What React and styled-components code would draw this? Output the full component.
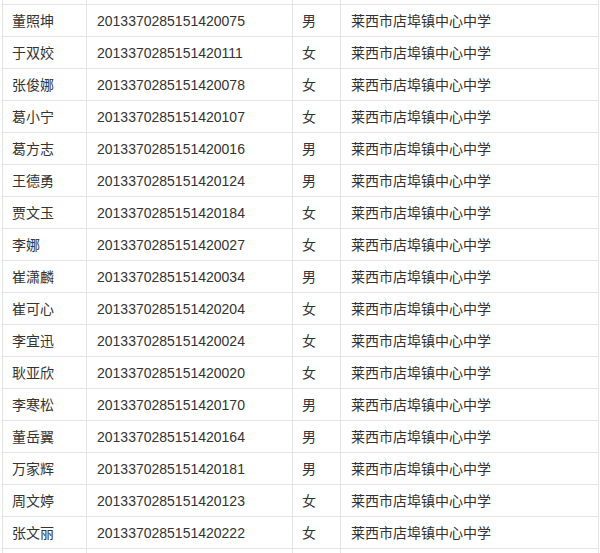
import React from "react";
import styled, { createGlobalStyle } from "styled-components";

const Global = createGlobalStyle`
  html, body { margin: 0; padding: 0; background: #fff; }
  body { font-family: "Liberation Sans", "Noto Sans CJK SC", sans-serif; }
`;

const Page = styled.div`
  width: 600px;
  height: 553px;
  overflow: hidden;
  background: #fff;
`;

const Table = styled.table`
  margin: -28px 0 0 2px;
  width: 596px;
  border-collapse: collapse;
  table-layout: fixed;
  font-size: 14px;
  color: #333;
`;

const Cell = styled.td`
  height: 31px;
  padding: 0 0 0 ${(p) => p.$pad || 10}px;
  border: 1px solid #e3e3e3;
  vertical-align: middle;
  white-space: nowrap;
  line-height: 20px;
  overflow: hidden;
`;

const rows = [
  ["董照坤", "2013370285151420075", "男"],
  ["于双姣", "2013370285151420111", "女"],
  ["张俊娜", "2013370285151420078", "女"],
  ["葛小宁", "2013370285151420107", "女"],
  ["葛方志", "2013370285151420016", "男"],
  ["王德勇", "2013370285151420124", "男"],
  ["贾文玉", "2013370285151420184", "女"],
  ["李娜", "2013370285151420027", "女"],
  ["崔潇麟", "2013370285151420034", "男"],
  ["崔可心", "2013370285151420204", "女"],
  ["李宜迅", "2013370285151420024", "女"],
  ["耿亚欣", "2013370285151420020", "女"],
  ["李寒松", "2013370285151420170", "男"],
  ["董岳翼", "2013370285151420164", "男"],
  ["万家辉", "2013370285151420181", "男"],
  ["周文婷", "2013370285151420123", "女"],
  ["张文丽", "2013370285151420222", "女"],
];

const school = "莱西市店埠镇中心中学";

export default function App() {
  return (
    <Page>
      <Global />
      <Table>
        <colgroup>
          <col style={{ width: 84 }} />
          <col style={{ width: 206 }} />
          <col style={{ width: 48 }} />
          <col style={{ width: 258 }} />
        </colgroup>
        <tbody>
          <tr>
            <Cell $pad={9}>&nbsp;</Cell>
            <Cell>&nbsp;</Cell>
            <Cell $pad={9}>&nbsp;</Cell>
            <Cell>&nbsp;</Cell>
          </tr>
          {rows.map(([name, id, sex]) => (
            <tr key={id}>
              <Cell $pad={9}>{name}</Cell>
              <Cell>{id}</Cell>
              <Cell $pad={9}>{sex}</Cell>
              <Cell>{school}</Cell>
            </tr>
          ))}
          <tr>
            <Cell $pad={9}>&nbsp;</Cell>
            <Cell>&nbsp;</Cell>
            <Cell $pad={9}>&nbsp;</Cell>
            <Cell>&nbsp;</Cell>
          </tr>
        </tbody>
      </Table>
    </Page>
  );
}
